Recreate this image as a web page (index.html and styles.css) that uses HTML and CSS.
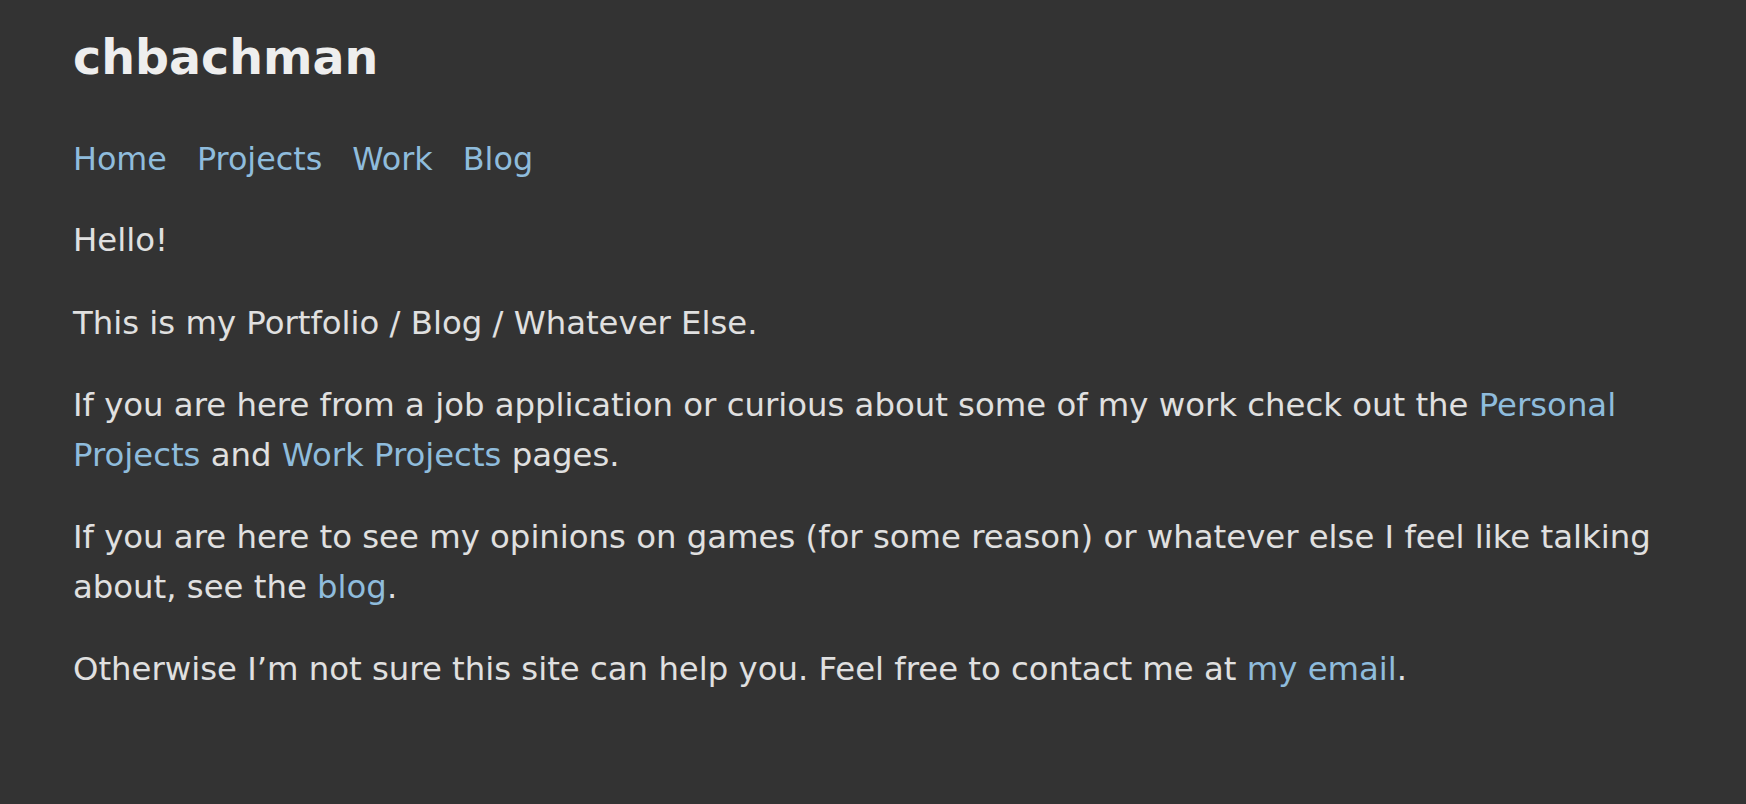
FILE: index.html
```html
<!DOCTYPE html>
<html lang="en">
<head>
<meta charset="utf-8">
<title>chbachman</title>
<link rel="stylesheet" href="styles.css">
</head>
<body>
<div class="page">
  <header class="site-header">
    <h1 class="site-title">chbachman</h1>
    <nav class="site-nav">
      <a href="#">Home</a>
      <a href="#">Projects</a>
      <a href="#">Work</a>
      <a href="#">Blog</a>
    </nav>
  </header>
  <main class="content">
    <p>Hello!</p>
    <p>This is my Portfolio / Blog / Whatever Else.</p>
    <p>If you are here from a job application or curious about some of my work check out the <a href="#">Personal Projects</a> and <a href="#">Work Projects</a> pages.</p>
    <p>If you are here to see my opinions on games (for some reason) or whatever else I feel like talking about, see the <a href="#">blog</a>.</p>
    <p>Otherwise I’m not sure this site can help you. Feel free to contact me at <a href="#">my email</a>.</p>
  </main>
</div>
</body>
</html>
```
FILE: styles.css
```css
html, body {
  margin: 0;
  padding: 0;
  background: #333333;
}
body {
  color: #e0e0e0;
  font-family: "DejaVu Sans", "Liberation Sans", sans-serif;
  font-size: 32.35px;
  line-height: 50px;
}
.page {
  padding: 22px 73px 40px;
  max-width: 1600px;
}
a {
  color: #8fbcdc;
  text-decoration: none;
}
.site-title {
  margin: 0;
  font-family: "DejaVu Sans", sans-serif;
  font-weight: bold;
  font-size: 47.5px;
  line-height: 72px;
  color: #eeeeee;
}
.site-nav {
  display: flex;
  gap: 30px;
  margin-top: 40px;
  font-size: 31.8px;
  line-height: 50px;
}
.content {
  margin-top: 31px;
}
.content p {
  margin: 0 0 32px;
}
.content p:first-child {
  margin-bottom: 33px;
}
```
